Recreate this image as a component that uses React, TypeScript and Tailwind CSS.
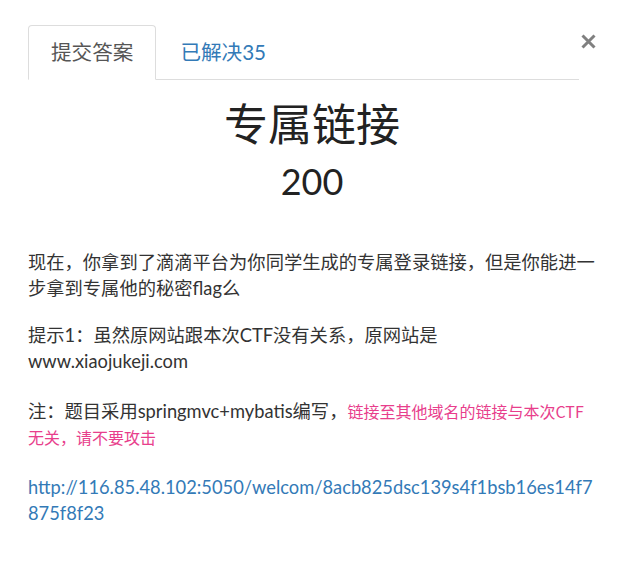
import React from 'react';

const FONT = "font-['Lato','Noto_Sans_CJK_SC',sans-serif]";

const tabs = [
  { label: '提交答案', active: true },
  { label: '已解决35', active: false },
];

export default function App() {
  return (
    <div className={`min-h-screen bg-white text-[#333] ${FONT}`}>
      <div className="pt-[25px] pl-[28px] pr-[36px]">
        <div className="flex items-start">
          <ul className="flex flex-1 border-b border-[#ddd]">
            {tabs.map((t) =>
              t.active ? (
                <li
                  key={t.label}
                  className="-mb-px h-[55px] flex items-center px-[22px] border border-[#ddd] border-b-white rounded-t bg-white text-[20.6px] text-[#555]"
                >
                  {t.label}
                </li>
              ) : (
                <li
                  key={t.label}
                  className="ml-[2px] h-[54px] flex items-center px-[22px] text-[20.6px] text-[#337ab7]"
                >
                  {t.label}
                </li>
              )
            )}
          </ul>
          <button className="ml-[2px] mr-0 mt-[9px] w-[15px] h-[15px] text-[#808080]">
            <svg viewBox="0 0 15 15" width="15" height="15">
              <path d="M1.5 1.5 L13.5 13.5 M13.5 1.5 L1.5 13.5" stroke="currentColor" strokeWidth="3" />
            </svg>
          </button>
        </div>

        <div className="mt-[20px] text-center text-[#222]">
          <h1 className="text-[44px] leading-[48px]">专属链接</h1>
          <h2 className="mt-[13px] text-[36px] leading-[40px]">200</h2>
        </div>

        <div className="mt-[48px] text-[18.3px] leading-[26px]">
          <p className="mb-[21px]">
            现在，你拿到了滴滴平台为你同学生成的专属登录链接，但是你能进一步拿到专属他的秘密flag么
          </p>
          <p className="mb-[24px]">
            提示1：虽然原网站跟本次CTF没有关系，原网站是www.xiaojukeji.com
          </p>
          <p className="mb-[24px]">
            注：题目采用springmvc+mybatis编写，
            <span className="text-[16px] text-[#e83e8c] font-['Noto_Sans_CJK_SC',sans-serif]">
              链接至其他域名的链接与本次CTF无关，请不要攻击
            </span>
          </p>
          <p className="break-all">
            <a className="text-[#337ab7]" href="#">
              http://116.85.48.102:5050/welcom/8acb825dsc139s4f1bsb16es14f7875f8f23
            </a>
          </p>
        </div>
      </div>
    </div>
  );
}
